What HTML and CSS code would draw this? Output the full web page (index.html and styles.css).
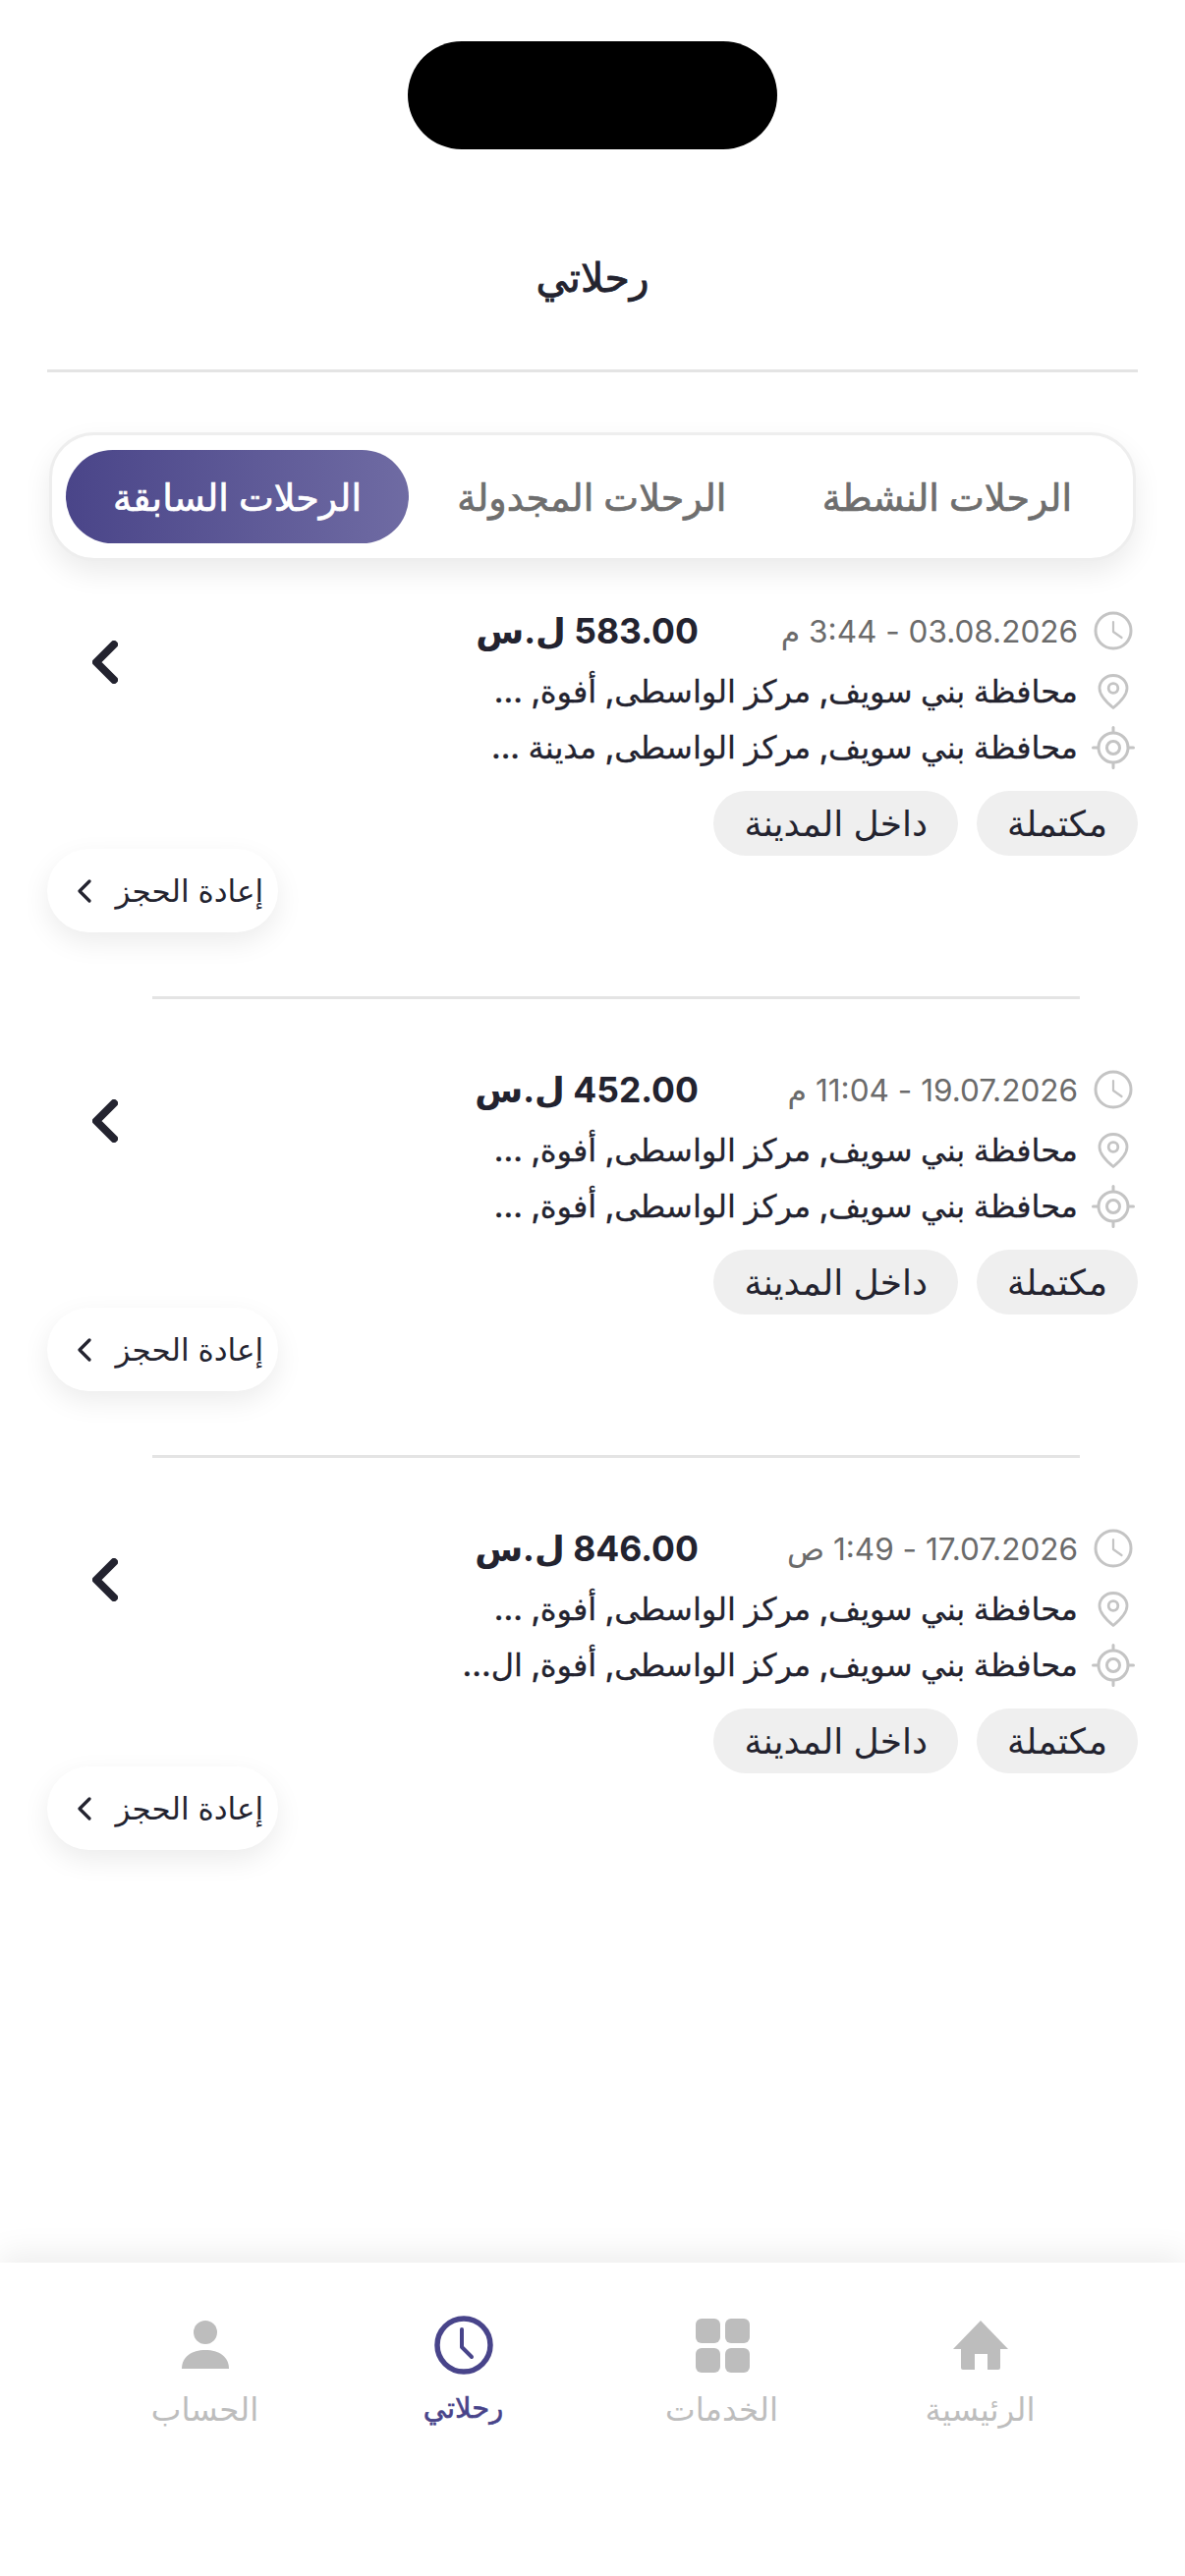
FILE: index.html
```html
<!DOCTYPE html>
<html lang="ar" dir="rtl">
<head>
    <meta charset="UTF-8">
    <meta name="viewport" content="width=device-width, initial-scale=1.0">
    <title>رحلاتي</title>
    <link rel="stylesheet" href="styles.css">
</head>
<body>
    <svg class="sprite" aria-hidden="true">
        <symbol id="icon-clock" viewBox="0 0 40 40">
            <circle cx="20" cy="20" r="18" fill="none" stroke="currentColor" stroke-width="3"/>
            <path d="M20 11V21l8.500 6" fill="none" stroke="currentColor" stroke-width="2.200" stroke-linecap="round" stroke-linejoin="round"/>
        </symbol>
        <symbol id="icon-pin" viewBox="0 0 32 36">
            <path d="M16 1.500C8 1.500 2 7.500 2 14.500 2 22 10.500 30 16 34.500 21.500 30 30 22 30 14.500 30 7.500 24 1.500 16 1.500Z" fill="none" stroke="currentColor" stroke-width="2.800" stroke-linejoin="round"/>
            <circle cx="16" cy="14.500" r="4.800" fill="none" stroke="currentColor" stroke-width="2.800"/>
        </symbol>
        <symbol id="icon-target" viewBox="0 0 44 44">
            <circle cx="22" cy="22" r="15" fill="none" stroke="currentColor" stroke-width="3"/>
            <circle cx="22" cy="22" r="6.500" fill="none" stroke="currentColor" stroke-width="3"/>
            <path d="M22 1.500v5M22 37.500v5M1.500 22h5M37.500 22h5" fill="none" stroke="currentColor" stroke-width="3" stroke-linecap="round"/>
        </symbol>
        <symbol id="icon-chevron" viewBox="0 0 26 44">
            <path d="M22 4 4 22l18 18" fill="none" stroke="currentColor" stroke-width="8" stroke-linecap="round" stroke-linejoin="round"/>
        </symbol>
        <symbol id="icon-chevron-small" viewBox="0 0 14 24">
            <path d="M12 2 2 12l10 10" fill="none" stroke="currentColor" stroke-width="3.200" stroke-linecap="round" stroke-linejoin="round"/>
        </symbol>
    </svg>

    <div class="page">
        <div class="notch"></div>

        <header class="header">
            <h1>رحلاتي</h1>
        </header>

        <nav class="tabs">
            <button class="tab">الرحلات النشطة</button>
            <button class="tab">الرحلات المجدولة</button>
            <button class="tab active">الرحلات السابقة</button>
        </nav>

        <main class="trips">
            <section class="trip">
                <div class="trip-top">
                    <div class="trip-info">
                        <div class="trip-head">
                            <div class="line">
                                <svg class="line-icon"><use href="#icon-clock"/></svg>
                                <span class="date">03.08.2026 - 3:44 م</span>
                            </div>
                            <span class="price">583.00 ل.س</span>
                        </div>
                        <div class="line">
                            <svg class="line-icon pin"><use href="#icon-pin"/></svg>
                            <span class="place">محافظة بني سويف, مركز الواسطى, أفوة, ...</span>
                        </div>
                        <div class="line">
                            <svg class="line-icon target"><use href="#icon-target"/></svg>
                            <span class="place">محافظة بني سويف, مركز الواسطى, مدينة ...</span>
                        </div>
                        <div class="chips">
                            <span class="chip">مكتملة</span>
                            <span class="chip">داخل المدينة</span>
                        </div>
                    </div>
                    <svg class="trip-arrow"><use href="#icon-chevron"/></svg>
                </div>
                <button class="rebook"><span>إعادة الحجز</span> <svg class="rebook-arrow"><use href="#icon-chevron-small"/></svg></button>
            </section>

            <section class="trip">
                <div class="trip-top">
                    <div class="trip-info">
                        <div class="trip-head">
                            <div class="line">
                                <svg class="line-icon"><use href="#icon-clock"/></svg>
                                <span class="date">19.07.2026 - 11:04 م</span>
                            </div>
                            <span class="price">452.00 ل.س</span>
                        </div>
                        <div class="line">
                            <svg class="line-icon pin"><use href="#icon-pin"/></svg>
                            <span class="place">محافظة بني سويف, مركز الواسطى, أفوة, ...</span>
                        </div>
                        <div class="line">
                            <svg class="line-icon target"><use href="#icon-target"/></svg>
                            <span class="place">محافظة بني سويف, مركز الواسطى, أفوة, ...</span>
                        </div>
                        <div class="chips">
                            <span class="chip">مكتملة</span>
                            <span class="chip">داخل المدينة</span>
                        </div>
                    </div>
                    <svg class="trip-arrow"><use href="#icon-chevron"/></svg>
                </div>
                <button class="rebook"><span>إعادة الحجز</span> <svg class="rebook-arrow"><use href="#icon-chevron-small"/></svg></button>
            </section>

            <section class="trip">
                <div class="trip-top">
                    <div class="trip-info">
                        <div class="trip-head">
                            <div class="line">
                                <svg class="line-icon"><use href="#icon-clock"/></svg>
                                <span class="date">17.07.2026 - 1:49 ص</span>
                            </div>
                            <span class="price">846.00 ل.س</span>
                        </div>
                        <div class="line">
                            <svg class="line-icon pin"><use href="#icon-pin"/></svg>
                            <span class="place">محافظة بني سويف, مركز الواسطى, أفوة, ...</span>
                        </div>
                        <div class="line">
                            <svg class="line-icon target"><use href="#icon-target"/></svg>
                            <span class="place">محافظة بني سويف, مركز الواسطى, أفوة, ال...</span>
                        </div>
                        <div class="chips">
                            <span class="chip">مكتملة</span>
                            <span class="chip">داخل المدينة</span>
                        </div>
                    </div>
                    <svg class="trip-arrow"><use href="#icon-chevron"/></svg>
                </div>
                <button class="rebook"><span>إعادة الحجز</span> <svg class="rebook-arrow"><use href="#icon-chevron-small"/></svg></button>
            </section>
        </main>

        <footer class="bottom-nav">
            <a class="nav-item">
                <svg class="nav-icon" viewBox="0 0 60 60"><path d="M30 5 58 34H50V53a2 2 0 0 1-2 2H37V39H24V55H12a2 2 0 0 1-2-2V34H2Z" fill="currentColor"/></svg>
                <span>الرئيسية</span>
            </a>
            <a class="nav-item">
                <svg class="nav-icon" viewBox="0 0 60 60">
                    <rect x="3" y="3" width="25" height="25" rx="6" fill="currentColor"/>
                    <rect x="33" y="3" width="25" height="25" rx="6" fill="currentColor"/>
                    <rect x="3" y="33" width="25" height="25" rx="6" fill="currentColor"/>
                    <rect x="33" y="33" width="25" height="25" rx="6" fill="currentColor"/>
                </svg>
                <span>الخدمات</span>
            </a>
            <a class="nav-item active">
                <svg class="nav-icon" viewBox="0 0 60 60">
                    <circle cx="30" cy="30" r="27" fill="none" stroke="currentColor" stroke-width="5.500"/>
                    <path d="M28 14V32L38 42" fill="none" stroke="currentColor" stroke-width="4" stroke-linecap="round" stroke-linejoin="round"/>
                </svg>
                <span>رحلاتي</span>
            </a>
            <a class="nav-item">
                <svg class="nav-icon" viewBox="0 0 60 60">
                    <circle cx="30" cy="17" r="12" fill="currentColor"/>
                    <path d="M6 54C6 42 16 35 30 35S54 42 54 54Z" fill="currentColor"/>
                </svg>
                <span>الحساب</span>
            </a>
        </footer>
    </div>
</body>
</html>
```

FILE: styles.css
```css
* {
    margin: 0;
    padding: 0;
    box-sizing: border-box;
}

body {
    font-family: 'Inter', 'DejaVu Sans', sans-serif;
    background: #fff;
    color: #23232f;
}

.sprite {
    display: none;
}

.page {
    min-height: 100vh;
    display: flex;
    flex-direction: column;
}

.notch {
    width: 376px;
    height: 110px;
    margin: 42px auto 0;
    background: #000;
    border-radius: 55px;
    flex-shrink: 0;
}

.header {
    margin: 0 48px;
    height: 227px;
    padding-top: 98px;
    text-align: center;
    border-bottom: 3px solid #e4e4e4;
}

.header h1 {
    font-size: 41px;
    font-weight: 500;
    line-height: 64px;
    -webkit-text-stroke: 0.8px #23232f;
}

.tabs {
    display: flex;
    justify-content: space-between;
    align-items: center;
    margin: 61px 50px 0;
    height: 131px;
    padding: 0 14px;
    background: #fff;
    border: 3px solid #eee;
    border-radius: 46px;
    box-shadow: 0 12px 28px rgba(0, 0, 0, 0.08);
}

.tab {
    height: 95px;
    padding: 0 48px;
    font: inherit;
    font-size: 38px;
    font-weight: 500;
    color: #6e6e6e;
    -webkit-text-stroke: 0.7px #6e6e6e;
    background: none;
    border: none;
    border-radius: 48px;
    white-space: nowrap;
}

.tab.active {
    color: #fff;
    -webkit-text-stroke: 0.7px #fff;
    background: linear-gradient(to right, #4a4589 0%, #6f6ba3 100%);
}

.trips {
    flex: 1;
    margin-top: 38px;
}

.trip {
    height: 467px;
    padding: 0 48px;
    position: relative;
}

.trip + .trip::before {
    content: "";
    position: absolute;
    top: -62px;
    left: 155px;
    right: 107px;
    height: 3px;
    background: #e4e4e4;
}

.trip-top {
    display: flex;
    justify-content: space-between;
}

.trip-info {
    flex: 1;
    display: flex;
    flex-direction: column;
}

.trip-head {
    display: flex;
    align-items: center;
    height: 66px;
}

.trip-head .line {
    width: 447px;
    flex-shrink: 0;
}

.line {
    display: flex;
    align-items: center;
    gap: 16px;
    height: 57px;
    padding-right: 5px;
}

.line-icon {
    width: 40px;
    height: 44px;
    color: #c4c4c4;
    flex-shrink: 0;
}

.line-icon.pin {
    height: 36px;
}

.line-icon.target {
    margin: 0 -2px;
    width: 44px;
}

.date {
    font-size: 31.500px;
    color: #6b6b6b;
    white-space: nowrap;
}

.price {
    font-size: 35.500px;
    font-weight: 700;
    white-space: nowrap;
}

.place {
    font-size: 32px;
    font-weight: 500;
    white-space: nowrap;
    -webkit-text-stroke: 0.3px #23232f;
}

.chips {
    display: flex;
    gap: 19px;
    margin-top: 16px;
}

.chip {
    display: flex;
    align-items: center;
    height: 66px;
    padding: 0 31px;
    font-size: 36px;
    background: #efefef;
    border-radius: 33px;
}

.trip-arrow {
    width: 26px;
    height: 44px;
    margin: 43px 0 0 46px;
    color: #23232f;
}

.rebook {
    display: flex;
    align-items: center;
    justify-content: space-between;
    width: 235px;
    height: 85px;
    margin: -7px auto 0 0;
    padding: 0 15px 0 31px;
    font: inherit;
    font-size: 31px;
    color: #23232f;
    white-space: nowrap;
    background: #fff;
    border: none;
    border-radius: 43px;
    box-shadow: 0 10px 28px rgba(0, 0, 0, 0.08);
}

.rebook-arrow {
    width: 14px;
    height: 24px;
}

.bottom-nav {
    height: 319px;
    padding: 54px 77px 0;
    display: grid;
    grid-template-columns: repeat(4, 1fr);
    align-items: start;
    background: #fff;
    box-shadow: 0 -10px 30px rgba(0, 0, 0, 0.07);
}

.nav-item {
    display: flex;
    flex-direction: column;
    align-items: center;
    gap: 16px;
    font-size: 32.500px;
    color: #bdbdbd;
}

.nav-item.active {
    color: #48448a;
    font-size: 29px;
    -webkit-text-stroke: 0.6px #48448a;
}

.nav-icon {
    width: 60px;
    height: 60px;
}
```
